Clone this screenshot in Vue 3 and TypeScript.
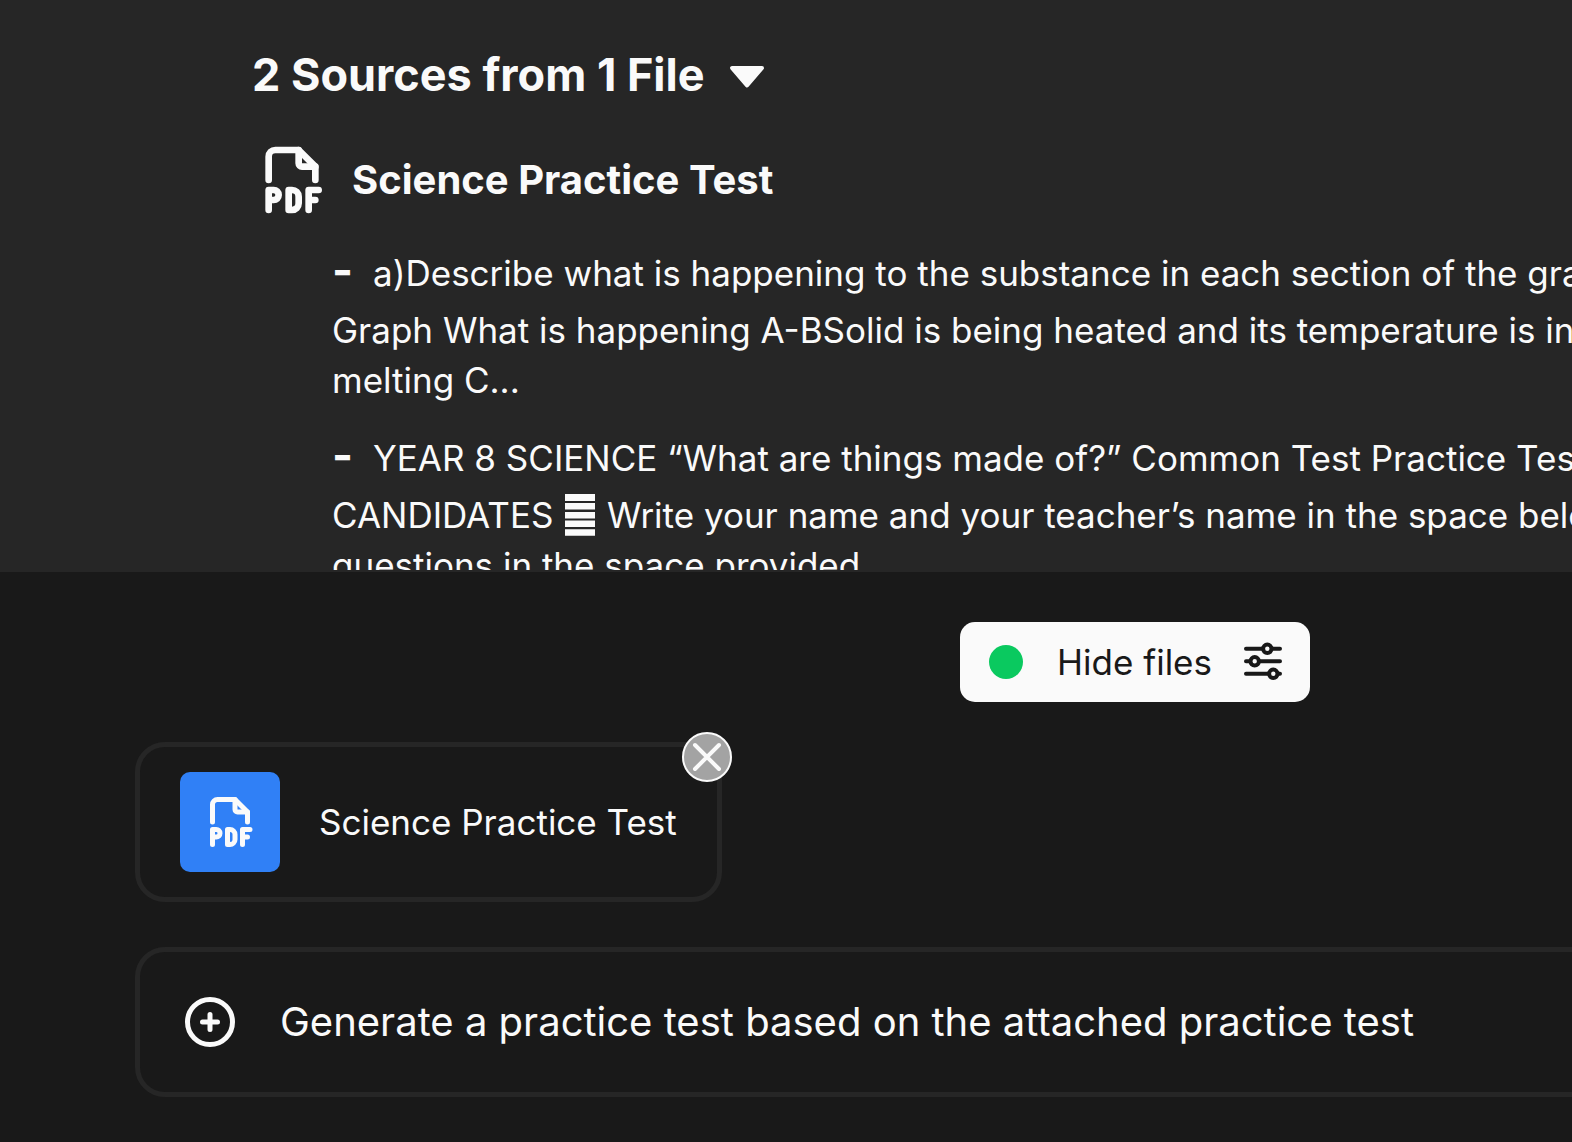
<script setup lang="ts">
import { ref } from 'vue'

interface Excerpt {
  id: number
  lines: string[]
}

const excerpts: Excerpt[] = [
  {
    id: 1,
    lines: [
      'a)Describe what is happening to the substance in each section of the graph',
      'Graph What is happening A-BSolid is being heated and its temperature is increasing',
      'melting C...',
    ],
  },
  {
    id: 2,
    lines: [
      'YEAR 8 SCIENCE “What are things made of?” Common Test Practice Test',
      'CANDIDATES ▤ Write your name and your teacher’s name in the space below',
      'questions in the space provided',
    ],
  },
]

const fileName = 'Science Practice Test'
const open = ref(true)
const filesShown = ref(true)
const prompt = ref('Generate a practice test based on the attached practice test')
</script>

<template>
  <div class="page">
    <section class="sources">
      <div class="sources-view">
        <button class="summary" type="button" :aria-expanded="open" @click="open = !open">
          2 Sources from 1 File
          <svg class="caret" viewBox="0 0 36 24" aria-hidden="true">
            <path d="M3 3h30L18 20.500z" />
          </svg>
        </button>
        <template v-if="open">
          <h2 class="source-title">
            <svg class="pdf-icon" viewBox="0 0 24 24" aria-hidden="true">
              <path d="M14 3v4a1 1 0 0 0 1 1h4" />
              <path d="M5 12V5a2 2 0 0 1 2-2h7l5 5v4" />
              <path d="M5 18h1.500a1.500 1.500 0 0 0 0-3H5v6" />
              <path d="M17 18h2M20 15h-3v6" />
              <path d="M11 15v6h1a2 2 0 0 0 2-2v-2a2 2 0 0 0-2-2z" />
            </svg>
            {{ fileName }}
          </h2>
          <ul class="excerpts">
            <li v-for="item in excerpts" :key="item.id">
              <span class="dash">-</span>
              <template v-for="(line, i) in item.lines" :key="i">
                <template v-for="(part, j) in line.split('▤')" :key="j"
                  ><svg v-if="j > 0" class="bars" viewBox="0 0 30 42" aria-hidden="true">
                    <path d="M0 0h30v7H0zM0 9h30v6.500H0zM0 18h30v6.500H0zM0 26.500h30v6.500H0zM0 35.200h30v6.500H0z" /></svg
                  >{{ part }}</template
                ><br v-if="i < item.lines.length - 1" />
              </template>
            </li>
          </ul>
        </template>
      </div>
    </section>

    <section class="dock">
      <div class="toggle-row">
        <button class="toggle" type="button" @click="filesShown = !filesShown">
          <span class="dot"></span>
          <span>Hide files</span>
          <svg class="sliders" viewBox="0 0 40 40" aria-hidden="true">
            <path d="M3 6.800h34M3 19.300h34M3 31.800h34" />
            <circle cx="24.300" cy="6.800" r="4.200" />
            <circle cx="11.700" cy="19.300" r="4.200" />
            <circle cx="30.300" cy="31.800" r="4.200" />
          </svg>
        </button>
      </div>

      <div v-if="filesShown" class="file-card">
        <span class="file-badge">
          <svg class="pdf-icon small" viewBox="0 0 24 24" aria-hidden="true">
            <path d="M14 3v4a1 1 0 0 0 1 1h4" />
            <path d="M5 12V5a2 2 0 0 1 2-2h7l5 5v4" />
            <path d="M5 18h1.500a1.500 1.500 0 0 0 0-3H5v6" />
            <path d="M17 18h2M20 15h-3v6" />
            <path d="M11 15v6h1a2 2 0 0 0 2-2v-2a2 2 0 0 0-2-2z" />
          </svg>
        </span>
        <span>{{ fileName }}</span>
        <button class="remove" type="button" aria-label="Remove file">
          <svg viewBox="0 0 46 46" aria-hidden="true">
            <path d="M11 11l24 24M35 11L11 35" />
          </svg>
        </button>
      </div>

      <form class="composer" @submit.prevent>
        <button class="attach" type="button" aria-label="Attach file">
          <svg viewBox="0 0 24 24" aria-hidden="true">
            <circle cx="12" cy="12" r="9" />
            <path d="M9 12h6M12 9v6" />
          </svg>
        </button>
        <input v-model="prompt" type="text" aria-label="Message" />
      </form>
    </section>
  </div>
</template>

<style>
body {
  margin: 0;
  background: #191919;
}
</style>

<style scoped>
.page {
  display: flex;
  flex-direction: column;
  height: 100vh;
  overflow: hidden;
  box-sizing: border-box;
  background: #191919;
  color: #fafafa;
  font-family: Inter, 'Liberation Sans', sans-serif;
  font-size: 35px;
  line-height: 50px;
}

button,
input {
  margin: 0;
  padding: 0;
  border: 0;
  background: none;
  color: inherit;
  font: inherit;
}

button {
  cursor: pointer;
}

svg {
  display: block;
  flex: none;
}

.sources {
  flex: 1;
  min-height: 0;
  display: flex;
  padding-bottom: 2px;
  box-sizing: border-box;
  background: #262626;
}

.sources-view {
  flex: 1;
  min-width: 0;
  overflow: hidden;
  padding: 40px 0 0 252px;
}

.summary {
  display: flex;
  align-items: center;
  gap: 24px;
  font-size: 45px;
  font-weight: 700;
  line-height: 70px;
}

.caret {
  width: 36px;
  height: 24px;
  margin-top: 4px;
  fill: currentColor;
  stroke: currentColor;
  stroke-width: 4;
  stroke-linejoin: round;
}

.source-title {
  display: flex;
  align-items: center;
  gap: 20px;
  margin: 30px 0 15px;
  font-size: 40px;
  font-weight: 700;
}

.pdf-icon {
  width: 80px;
  height: 80px;
  fill: none;
  stroke: currentColor;
  stroke-width: 2;
  stroke-linecap: round;
  stroke-linejoin: round;
}

.pdf-icon.small {
  width: 60px;
  height: 60px;
}

.excerpts {
  margin: 0;
  padding: 0 0 0 80px;
  list-style: none;
  white-space: nowrap;
}

.excerpts li {
  margin-bottom: 15px;
}

.dash {
  margin-right: 20px;
  font-size: 45px;
  font-weight: 700;
  line-height: 70px;
}

.bars {
  display: inline-block;
  width: 30px;
  height: 42px;
  margin: 0 2px -8px;
  vertical-align: baseline;
  fill: currentColor;
}

.dock {
  flex: none;
  padding: 50px 0 45px 135px;
}

.toggle-row {
  display: flex;
  justify-content: flex-end;
  margin-bottom: 40px;
  padding-right: 262px;
}

.toggle {
  display: flex;
  align-items: center;
  height: 80px;
  padding: 0 27px 0 29px;
  border-radius: 15px;
  background: #fafafa;
  color: #191919;
}

.dot {
  width: 34px;
  height: 34px;
  margin-right: 34px;
  border-radius: 50%;
  background: #0ac95f;
}

.sliders {
  width: 40px;
  height: 40px;
  margin-left: 31px;
  fill: #fafafa;
  stroke: currentColor;
  stroke-width: 4;
  stroke-linecap: round;
}

.file-card {
  position: relative;
  display: flex;
  align-items: center;
  gap: 39px;
  width: fit-content;
  margin-bottom: 45px;
  padding: 25px 40px;
  border: 5px solid #262626;
  border-radius: 30px;
}

.file-badge {
  display: flex;
  align-items: center;
  justify-content: center;
  width: 100px;
  height: 100px;
  border-radius: 10px;
  background: #3080f6;
}

.remove {
  position: absolute;
  top: -15px;
  right: -15px;
  width: 50px;
  height: 50px;
  box-sizing: border-box;
  border: 2px solid #fafafa;
  border-radius: 50%;
  background: #a3a3a3;
}

.remove svg {
  width: 46px;
  height: 46px;
  fill: none;
  stroke: currentColor;
  stroke-width: 4;
  stroke-linecap: round;
}

.composer {
  display: flex;
  align-items: center;
  gap: 40px;
  margin-right: -40px;
  padding: 40px;
  border: 5px solid #262626;
  border-radius: 30px;
}

.attach svg {
  width: 60px;
  height: 60px;
  fill: none;
  stroke: currentColor;
  stroke-width: 2;
  stroke-linecap: round;
}

.composer input {
  flex: 1;
  min-width: 0;
  height: 58px;
  padding-bottom: 2px;
  outline: 0;
  font-size: 40px;
}
</style>
